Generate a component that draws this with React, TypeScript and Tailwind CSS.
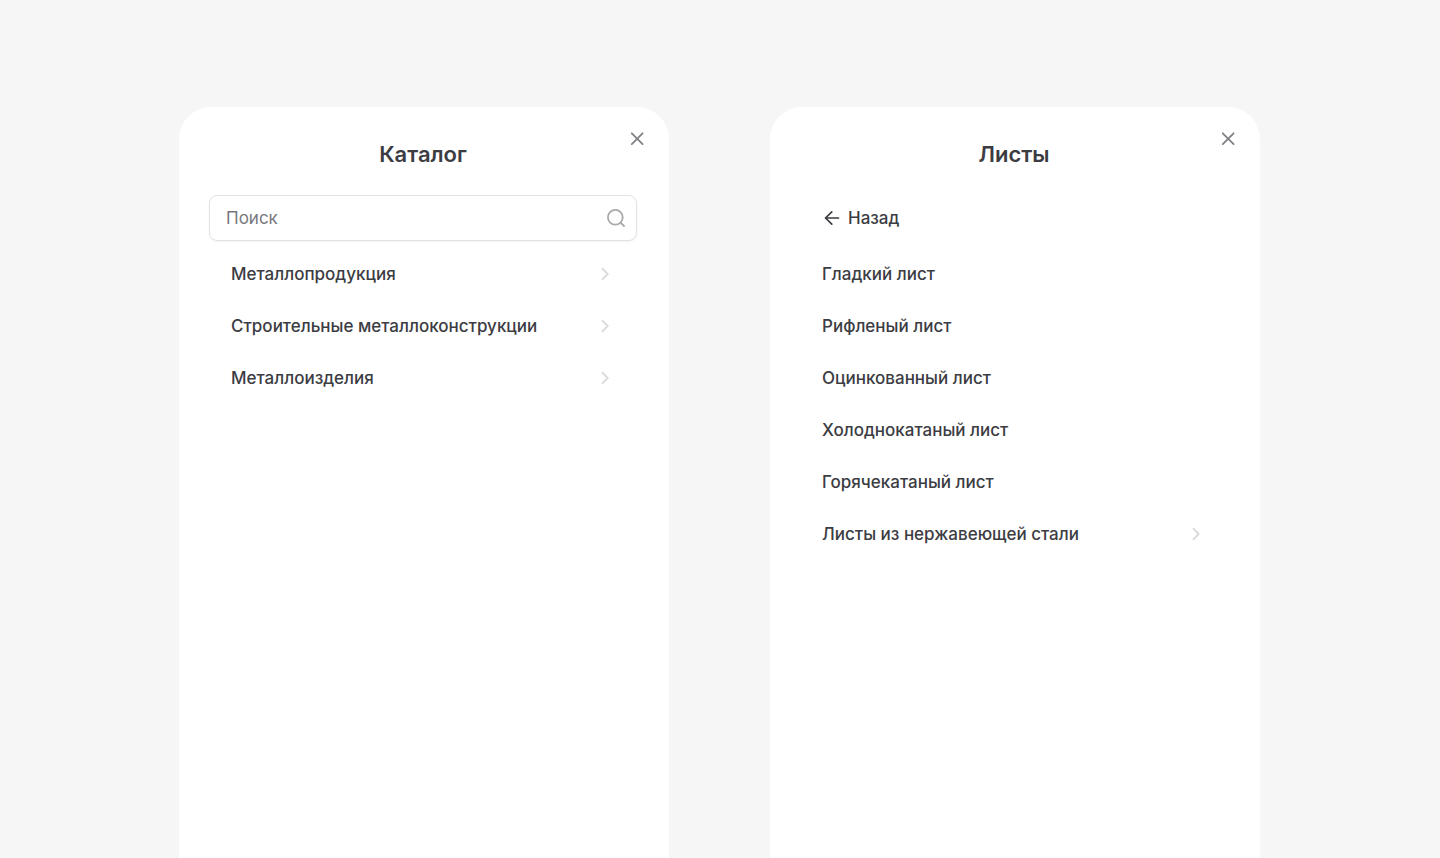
import type { ReactNode } from "react";

const catalog = ["Металлопродукция", "Строительные металлоконструкции", "Металлоизделия"];
const sheets = ["Гладкий лист", "Рифленый лист", "Оцинкованный лист", "Холоднокатаный лист", "Горячекатаный лист", "Листы из нержавеющей стали"];

function Chevron() {
  return (
    <svg className="size-5 shrink-0 text-[#dcdcde]" viewBox="0 0 20 20" fill="none" stroke="currentColor" strokeWidth="2" strokeLinecap="round" strokeLinejoin="round" aria-hidden="true">
      <path d="M7.5 4.8 12.700 10l-5.200 5.200" />
    </svg>
  );
}

function Panel({ title, children }: { title: string; children: ReactNode }) {
  return (
    <section className="relative min-w-0 flex-1 rounded-t-[32px] bg-white pt-[31px] pr-8 pl-[30px]">
      <button type="button" aria-label="Закрыть" className="absolute top-5 right-5 flex size-6 items-center justify-center text-[#808085]">
        <svg className="size-5 shrink-0" viewBox="0 0 20 20" fill="none" stroke="currentColor" strokeWidth="1.8" strokeLinecap="round" aria-hidden="true">
          <path d="m4.800 4.300 10.800 10.800m0-10.800-10.800 10.800" />
        </svg>
      </button>
      <h2 className="text-center text-[22px] leading-8 font-semibold">{title}</h2>
      {children}
    </section>
  );
}

function Menu({ items, nested }: { items: string[]; nested: string[] }) {
  return (
    <ul className="mt-[7px] flex flex-col">
      {items.map((item) => (
        <li key={item}>
          <button type="button" className="flex h-[52px] w-full items-center justify-between px-[22px] text-left">
            {item}
            {nested.includes(item) && <Chevron />}
          </button>
        </li>
      ))}
    </ul>
  );
}

export default function App() {
  return (
    <main className="flex min-h-screen gap-[101px] bg-[#f6f6f6] pt-[107px] pr-[180px] pl-[179px] font-['Inter',sans-serif] text-[17px] leading-6 font-medium text-[#3c3c43]">
      <Panel title="Каталог">
        <label className="mt-[25px] flex h-[46px] items-center rounded-lg border border-[#e2e2e4] pr-[10px] pl-4 shadow-xs">
          <input type="text" aria-label="Поиск" placeholder="Поиск" className="h-7 min-w-0 flex-1 font-normal leading-7 outline-none placeholder:text-[#77777d]" />
          <svg className="size-5 shrink-0 text-[#a9a9ab]" viewBox="0 0 20 20" fill="none" stroke="currentColor" strokeWidth="1.8" strokeLinecap="round" aria-hidden="true">
            <circle cx="9.300" cy="9.300" r="7.400" />
            <path d="m14.800 14.800 3.200 3.200" />
          </svg>
        </label>
        <Menu items={catalog} nested={catalog} />
      </Panel>
      <Panel title="Листы">
        <button type="button" className="mt-[25px] flex h-[46px] items-center gap-1.5 px-[22px]">
          <svg className="size-5 shrink-0" viewBox="0 0 20 20" fill="none" stroke="currentColor" strokeWidth="1.7" strokeLinecap="round" strokeLinejoin="round" aria-hidden="true">
            <path d="M16.500 10H3.500m6.300-6.200L3.500 10l6.300 6.200" />
          </svg>
          Назад
        </button>
        <Menu items={sheets} nested={["Листы из нержавеющей стали"]} />
      </Panel>
    </main>
  );
}
